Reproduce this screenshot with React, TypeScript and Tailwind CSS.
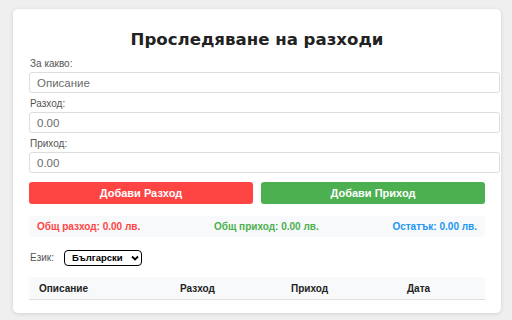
import { useState } from 'react'

const font = { fontFamily: '"Liberation Sans", Arial, sans-serif' }
const titleFont = { fontFamily: '"DejaVu Sans", Verdana, sans-serif' }

function Field({ label, placeholder }: { label: string; placeholder: string }) {
  return (
    <div className="flex flex-col">
      <label className="text-[10px] leading-[12px] text-[#555] mb-[2px] pl-[1px]">{label}</label>
      <input
        className="w-[471px] h-[21px] border border-[#ddd] rounded-[3px] px-[7px] text-[11.5px] text-[#333] placeholder:text-[#6b6b6b] bg-white outline-none"
        placeholder={placeholder}
      />
    </div>
  )
}

export default function App() {
  const [lang, setLang] = useState('bg')

  return (
    <div className="w-[512px] h-[320px] bg-[#efefef] overflow-hidden pt-[9px] pl-[13px]" style={font}>
      <div className="w-[488px] h-[304px] bg-white rounded-[5px] shadow-[0_1px_4px_rgba(0,0,0,0.12)] px-[16px] pt-[19px]">
        <h1 className="text-center text-[16.6px] leading-[24px] font-bold text-[#222] mb-[6px]" style={titleFont}>
          Проследяване на разходи
        </h1>

        <div className="flex flex-col gap-[5px]">
          <Field label="За какво:" placeholder="Описание" />
          <Field label="Разход:" placeholder="0.00" />
          <Field label="Приход:" placeholder="0.00" />
        </div>

        <div className="flex gap-[8px] mt-[9px]">
          <button className="flex-1 h-[22px] bg-[#ff4444] rounded-[3px] text-white text-[11px] font-bold">
            Добави Разход
          </button>
          <button className="flex-1 h-[22px] bg-[#4caf50] rounded-[3px] text-white text-[11px] font-bold">
            Добави Приход
          </button>
        </div>

        <div className="flex justify-between items-center h-[21px] mt-[12px] bg-[#f8f9fa] rounded-[4px] px-[8px] text-[10px] font-bold">
          <span className="text-[#ff4444]">Общ разход: 0.00 лв.</span>
          <span className="text-[#4caf50]">Общ приход: 0.00 лв.</span>
          <span className="text-[#2196f3]">Остатък: 0.00 лв.</span>
        </div>

        <div className="flex items-center gap-[10px] mt-[13px] pl-[1px] h-[16px]">
          <span className="text-[10px] leading-[12px] text-[#555]">Език:</span>
          <div className="relative h-[16px]">
            <select
              value={lang}
              onChange={(e) => setLang(e.target.value)}
              className="block appearance-none h-[16px] w-[78px] border-[1.5px] border-black rounded-[4px] text-[9.5px] leading-[12px] font-bold text-black pl-[7px] py-0 bg-white outline-none"
            >
              <option value="bg">Български</option>
              <option value="en">English</option>
            </select>
            <svg
              className="absolute right-[3px] top-[5px] pointer-events-none"
              width="8"
              height="6"
              viewBox="0 0 8 6"
            >
              <polyline points="1,1.5 4,4.5 7,1.5" fill="none" stroke="black" strokeWidth="1.8" />
            </svg>
          </div>
        </div>

        <div className="mt-[11px] grid grid-cols-[141px_111px_116px_88px] h-[23px] items-center bg-[#f8f9fa] border-b border-[#e0e0e0] text-[10px] font-bold text-[#222]">
          <span className="pl-[10px]">Описание</span>
          <span className="pl-[10px]">Разход</span>
          <span className="pl-[10px]">Приход</span>
          <span className="pl-[10px]">Дата</span>
        </div>
      </div>
    </div>
  )
}
